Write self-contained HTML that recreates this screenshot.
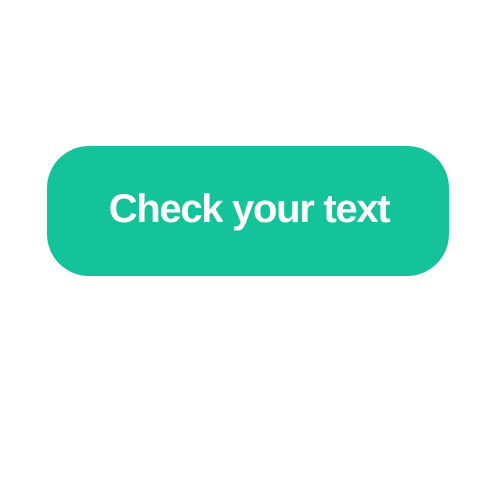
<!DOCTYPE html>
<html><head><style>
html,body{margin:0;padding:0;background:#fff;width:500px;height:500px;overflow:hidden}
.btn{position:absolute;left:47px;top:146px;width:402px;height:130px;border-radius:42px;background:#15c39a}
.t{position:absolute;left:-1px;width:500px;top:184px;text-align:center;font-family:"Liberation Sans",sans-serif;font-weight:bold;font-size:40px;letter-spacing:-1.3px;color:#fff;line-height:50px}
</style></head><body>
<div class="btn"></div>
<div class="t">Check your text</div>
</body></html>
